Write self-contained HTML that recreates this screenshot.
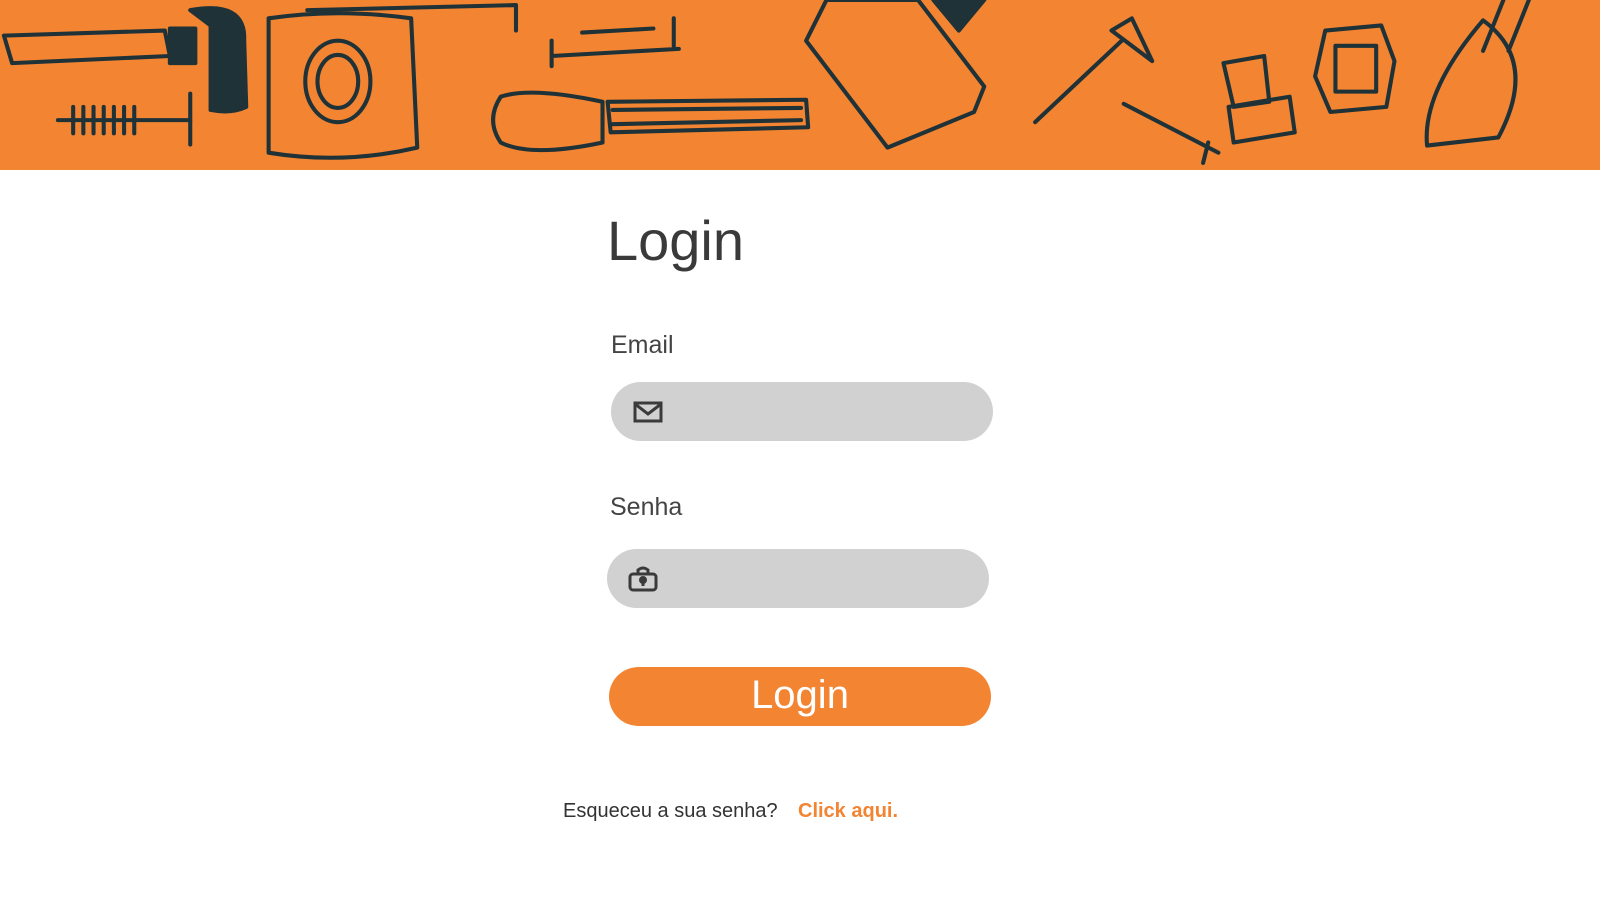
<!DOCTYPE html>
<html><head><meta charset="utf-8"><style>
*{margin:0;padding:0;box-sizing:border-box}
body{width:1600px;height:900px;background:#fff;font-family:"Liberation Sans",sans-serif;color:#3a3a3a;position:relative;overflow:hidden}
.banner{position:absolute;left:0;top:0;width:1600px;height:170px;background:#f28432}
.abs{position:absolute}
.inp{position:absolute;background:#d1d1d1;border-radius:30px;height:59px;width:382px}
</style></head><body>
<div class="banner">
<svg width="1600" height="170" viewBox="0 0 1568 167" fill="none" stroke="#1f3238" stroke-width="4" stroke-linecap="round" stroke-linejoin="round">
<path d="M2 35 L160 30 L165 55 L10 62 Z"/><path d="M165 28h25v34h-25z" fill="#1f3238"/>
<path d="M185 10 Q240 0 238 40 L240 105 Q225 112 205 108 L205 25 Z" fill="#1f3238"/>
<path d="M55 118 h130 M70 105v26 M80 105v26 M90 105v26 M100 105v26 M110 105v26 M120 105v26 M130 105v26"/><path d="M185 92 v50"/>
<path d="M262 18 Q330 8 402 18 L408 145 Q335 162 262 150 Z"/>
<ellipse cx="330" cy="80" rx="32" ry="40"/><ellipse cx="330" cy="80" rx="20" ry="26"/>
<path d="M300 10 L505 5 V30"/>
<path d="M540 55 L665 48 M540 40 v25 M660 18 v28 M570 32 L640 28"/>
<path d="M490 95 Q520 85 590 100 L590 140 Q520 155 490 140 Q475 118 490 95 Z"/>
<path d="M595 100 L790 98 L792 125 L598 130 Z"/><path d="M600 108 L785 106 M600 122 L785 118"/>
<path d="M810 0 L790 40 L870 145 L955 110 L965 85 L900 0 Z"/>
<path d="M915 0 L940 30 L965 0" fill="#1f3238"/>
<path d="M1015 120 L1100 40 M1090 30 L1130 60 L1110 18 Z"/>
<path d="M1102 102 L1195 150 M1185 140 L1180 160"/>
<path d="M1200 62 L1240 55 L1245 100 L1210 105 Z M1205 105 L1265 95 L1270 130 L1210 140 Z"/>
<path d="M1300 30 L1355 25 L1368 60 L1360 105 L1305 110 L1290 75 Z"/><path d="M1310 45 h40 v45 h-40 z"/>
<path d="M1455 20 Q1510 60 1470 135 L1400 143 Q1395 90 1455 20 Z"/><path d="M1475 0 L1455 50 M1500 0 L1480 50"/>
</svg>
</div>
<div class="abs" style="left:607px;top:208px;font-size:56px;color:#3a3a3a">Login</div>
<div class="abs" style="left:611px;top:331px;font-size:25px;color:#444">Email</div>
<div class="inp" style="left:611px;top:382px">
<svg class="abs" style="left:22px;top:19px" width="30" height="22" viewBox="0 0 30 22" fill="none" stroke="#3a3a3a" stroke-width="3"><rect x="2" y="2" width="26" height="18"/><path d="M2 3 L15 13 L28 3"/></svg>
</div>
<div class="abs" style="left:610px;top:493px;font-size:25px;color:#444">Senha</div>
<div class="inp" style="left:607px;top:549px">
<svg class="abs" style="left:21px;top:17px" width="30" height="26" viewBox="0 0 30 26" fill="none" stroke="#3a3a3a" stroke-width="3"><rect x="2" y="8" width="26" height="16" rx="3"/><path d="M10 8 V4 Q15 0 20 4 V8"/><circle cx="15" cy="14" r="2.5" fill="#3a3a3a"/><path d="M15 15 v5" /></svg>
</div>
<div class="abs" style="left:609px;top:667px;width:382px;height:59px;background:#f28432;border-radius:30px;color:#fff;font-size:40px;text-align:center;line-height:56px">Login</div>
<div class="abs" style="left:563px;top:800px;font-size:20px;color:#333">Esqueceu a sua senha?</div>
<div class="abs" style="left:798px;top:800px;font-size:20px;color:#f28432;font-weight:bold">Click aqui.</div>
</body></html>
